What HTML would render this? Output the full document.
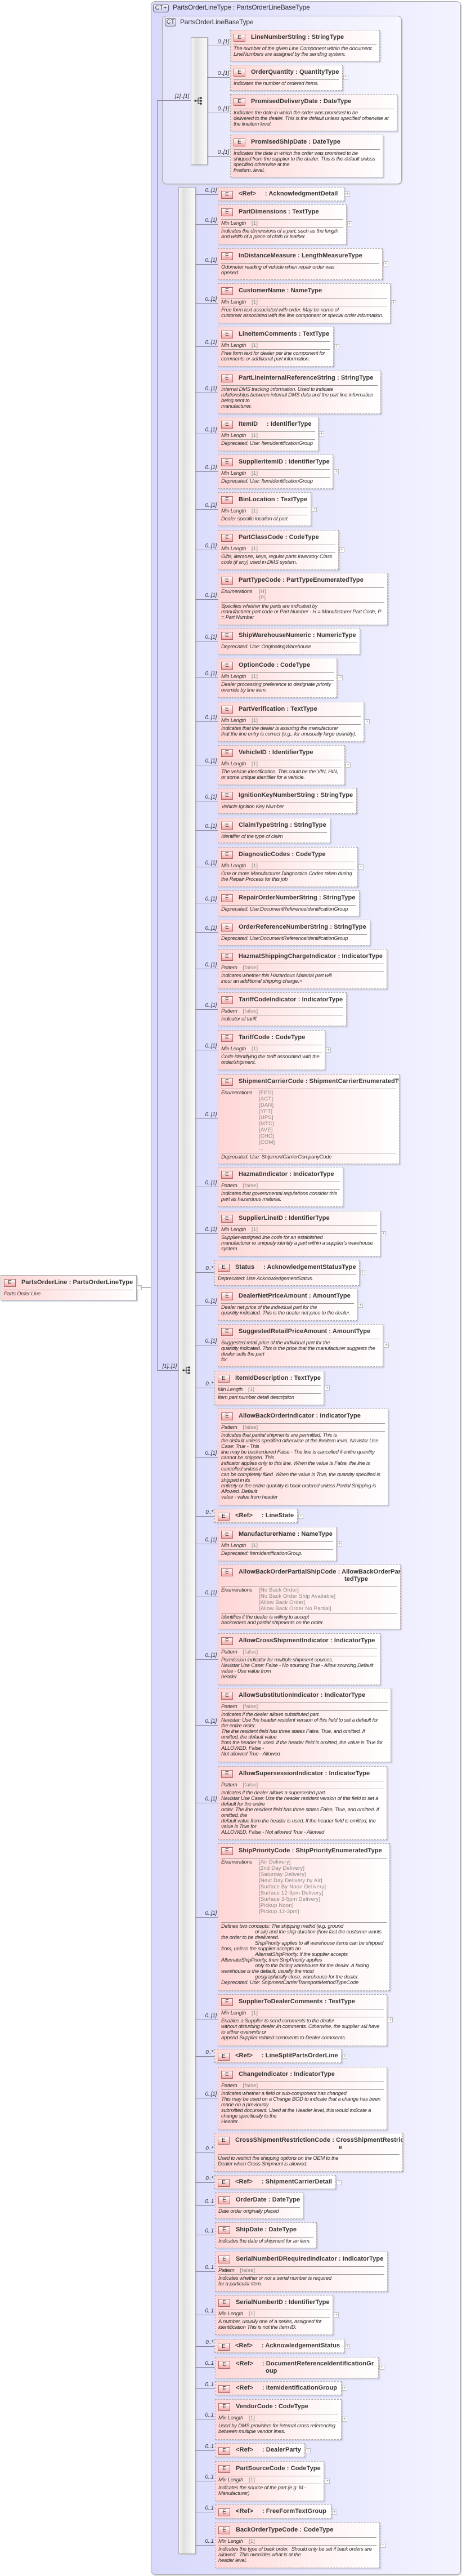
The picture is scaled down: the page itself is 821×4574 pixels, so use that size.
<!DOCTYPE html>
<html><head><meta charset="utf-8">
<style>
*{margin:0;padding:0;box-sizing:border-box}
body{width:821px;height:4574px;position:relative;background:#fff;font-family:"Liberation Sans",sans-serif;color:#333;overflow:hidden}
.ab{position:absolute}
.outer{left:268px;top:2px;width:551px;height:4570px;border:1px solid #aaa;border-radius:8px;background:linear-gradient(90deg,#d8d8fb,#f3f3ff);box-shadow:1px 1px 2px #bbb}
.inner{left:288px;top:28px;width:426px;height:299px;border:1px solid #aaa;border-radius:8px;background:linear-gradient(90deg,#e4e4fc,#f6f6ff);box-shadow:1px 1px 2px #bbb}
.ct{position:absolute;border:1px solid #667;border-radius:4px;background:linear-gradient(#fff,#c9c9ee);font-size:11px;line-height:12px;text-align:center;color:#334}
.ttl{position:absolute;font-size:12px;color:#333;letter-spacing:-0.2px}
.seq{position:absolute;border:1px solid #aaa;background:linear-gradient(90deg,#f4f4f4,#e0e0e0 30%,#fafafa);box-shadow:1px 1px 2px #bbb}
.ln{position:absolute;height:1px;background:#8a8a9a}
.vl{position:absolute;width:1px;background:#8a8a9a}
.c{position:absolute;font-style:italic;font-size:10px;width:26px;text-align:right;color:#333;letter-spacing:-0.3px}
.e{position:absolute;border:1px dashed #a8a8a8;background:linear-gradient(90deg,#ffd6d6,#fff0f0 60%,#fff);box-shadow:2px 2px 2px #c8c8d8;overflow:hidden}
.e.s{border-style:solid}
.h{position:relative;height:26px;line-height:24px;padding-left:31px;font-weight:bold;font-size:11px;color:#333;margin:0 5px 0 5px;border-bottom:1px solid #999;white-space:nowrap;letter-spacing:0.1px}
.h.r{border-bottom:none;height:23px;line-height:22px}
.h.t2{height:38px;line-height:13px;padding-top:6px}
.h i{position:absolute;left:0;top:6px;width:21px;height:14px;border:1px solid #a66;background:linear-gradient(#fff,#f3a8a8);font-style:normal;font-weight:normal;font-size:10px;line-height:12px;text-align:center;color:#333}
.h.t2 i{top:6px}
.f{margin:0 5px;height:14px;line-height:14px;border-bottom:1px solid #999;font-style:italic;font-size:9.5px;letter-spacing:-0.3px;white-space:nowrap}
.f b{font-weight:normal;font-style:normal;color:#888;margin-left:10px;letter-spacing:0.2px}
.en{margin:0 5px;border-bottom:1px solid #999;font-size:9.5px;position:relative;padding:1px 0 2px 67px;line-height:11px;color:#888;letter-spacing:0.2px;white-space:nowrap}
.en span{position:absolute;left:0;top:1px;font-style:italic;color:#333;letter-spacing:-0.3px}
.d{padding:2px 5px 2px 5px;font-style:italic;font-size:9.5px;line-height:10px;letter-spacing:-0.3px;white-space:nowrap}
.d u{text-decoration:none;padding-left:60px}
.p{position:absolute;width:9px;height:9px;border:1px solid #bbb;background:#fff;font-size:9px;line-height:7px;text-align:center;color:#999}
.ico{position:absolute;width:16px;height:16px}
</style></head><body>

<!-- root -->
<div class="e s" style="left:1px;top:2264px;width:242px;height:45px;border-color:#aaa"><div class="h" style="border-bottom:1px solid #999"><i>E</i>PartsOrderLine&nbsp;: PartsOrderLineType</div><div class="d">Parts Order Line</div></div>
<div class="p" style="left:243px;top:2282px;line-height:5px">&minus;</div>
<div class="ln" style="left:252px;top:2286px;width:27px"></div>

<div class="ab outer"></div>
<div class="ct" style="left:272px;top:7px;width:28px;height:15px">CT+</div>
<div class="ttl" style="left:307px;top:6px">PartsOrderLineType : PartsOrderLineBaseType</div>

<div class="ab inner"></div>
<div class="ct" style="left:293px;top:32px;width:20px;height:15px">CT</div>
<div class="ttl" style="left:320px;top:32px">PartsOrderLineBaseType</div>

<!-- main connector -->
<div class="vl" style="left:279px;top:178px;height:2256px"></div>
<div class="ln" style="left:279px;top:178px;width:60px"></div>
<div class="c" style="left:306px;top:166px;width:30px">[1]..[1]</div>
<div class="ln" style="left:279px;top:2433px;width:38px"></div>
<div class="c" style="left:284px;top:2421px;width:30px">[1]..[1]</div>

<!-- inner seq -->
<div class="seq" style="left:339px;top:66px;width:30px;height:227px"></div>
<svg class="ico" style="left:345px;top:171px" viewBox="0 0 16 16"><circle cx="2" cy="8" r="1.6" fill="#333"/><path d="M2 8H7M7 3V13M7 3H11M7 8H11M7 13H11" stroke="#333" fill="none"/><circle cx="12" cy="3" r="1.8" fill="#333"/><circle cx="12" cy="8" r="1.8" fill="#333"/><circle cx="12" cy="13" r="1.8" fill="#333"/></svg>

<div class="ln" style="left:368px;top:81px;width:41px"></div><div class="c" style="left:381px;top:69px">0..[1]</div>
<div class="e" style="left:409px;top:53px;width:266px;height:56px"><div class="h"><i>E</i>LineNumberString&nbsp;: StringType</div><div class="d">The number of the given Line Component within the document.<br>LineNumbers are assigned by the sending system.</div></div>

<div class="ln" style="left:368px;top:137px;width:41px"></div><div class="c" style="left:381px;top:125px">0..[1]</div>
<div class="e" style="left:409px;top:115px;width:200px;height:46px"><div class="h"><i>E</i>OrderQuantity&nbsp;: QuantityType</div><div class="d">Indicates the number of ordered items.</div></div>
<div class="p" style="left:610px;top:133px">+</div>

<div class="ln" style="left:368px;top:200px;width:41px"></div><div class="c" style="left:381px;top:188px">0..[1]</div>
<div class="e" style="left:409px;top:167px;width:297px;height:66px"><div class="h"><i>E</i>PromisedDeliveryDate&nbsp;: DateType</div><div class="d">Indicates the date in which the order was promised to be<br>delivered to the dealer. This is the default unless specified otherwise at<br>the lineitem level.</div></div>

<div class="ln" style="left:368px;top:277px;width:41px"></div><div class="c" style="left:381px;top:265px">0..[1]</div>
<div class="e" style="left:409px;top:239px;width:272px;height:76px"><div class="h"><i>E</i>PromisedShipDate&nbsp;: DateType</div><div class="d">Indicates the date in which the order was promised to be<br>shipped from the supplier to the dealer. This is the default unless<br>specified otherwise at the<br>lineitem. level.</div></div>

<!-- outer seq -->
<div class="seq" style="left:317px;top:332px;width:31px;height:4203px"></div>
<svg class="ico" style="left:324px;top:2425px" viewBox="0 0 16 16"><circle cx="2" cy="8" r="1.6" fill="#333"/><path d="M2 8H7M7 3V13M7 3H11M7 8H11M7 13H11" stroke="#333" fill="none"/><circle cx="12" cy="3" r="1.8" fill="#333"/><circle cx="12" cy="8" r="1.8" fill="#333"/><circle cx="12" cy="13" r="1.8" fill="#333"/></svg>

<div class="ln" style="left:347px;top:345px;width:40px"></div><div class="c" style="left:359px;top:333px">0..[1]</div>
<div class="e" style="left:387px;top:332px;width:225px;height:25px"><div class="h r"><i>E</i>&lt;Ref&gt;&nbsp;&nbsp;&nbsp;&nbsp;&nbsp;: AcknowledgmentDetail</div></div><div class="p" style="left:613px;top:340px">+</div>

<div class="ln" style="left:347px;top:398px;width:40px"></div><div class="c" style="left:359px;top:386px">0..[1]</div>
<div class="e" style="left:387px;top:363px;width:229px;height:71px"><div class="h"><i>E</i>PartDimensions&nbsp;: TextType</div><div class="f">Min Length<b>[1]</b></div><div class="d">Indicates the dimensions of a part, such as the length<br>and width of a piece of cloth or leather.</div></div><div class="p" style="left:617px;top:393px">+</div>

<div class="ln" style="left:347px;top:469px;width:40px"></div><div class="c" style="left:359px;top:457px">0..[1]</div>
<div class="e" style="left:387px;top:441px;width:293px;height:56px"><div class="h"><i>E</i>InDistanceMeasure&nbsp;: LengthMeasureType</div><div class="d">Odometer reading of vehicle when repair order was<br>opened</div></div><div class="p" style="left:681px;top:464px">+</div>

<div class="ln" style="left:347px;top:538px;width:40px"></div><div class="c" style="left:359px;top:526px">0..[1]</div>
<div class="e" style="left:387px;top:503px;width:307px;height:71px"><div class="h"><i>E</i>CustomerName&nbsp;: NameType</div><div class="f">Min Length<b>[1]</b></div><div class="d">Free form text associated with order. May be name of<br>customer associated with the line component or special order information.</div></div><div class="p" style="left:695px;top:533px">+</div>

<div class="ln" style="left:347px;top:615px;width:40px"></div><div class="c" style="left:359px;top:603px">0..[1]</div>
<div class="e" style="left:387px;top:580px;width:206px;height:71px"><div class="h"><i>E</i>LineItemComments&nbsp;: TextType</div><div class="f">Min Length<b>[1]</b></div><div class="d">Free form text for dealer per line component for<br>comments or additional part information.</div></div><div class="p" style="left:594px;top:611px">+</div>

<div class="ln" style="left:347px;top:697px;width:40px"></div><div class="c" style="left:359px;top:685px">0..[1]</div>
<div class="e" style="left:387px;top:658px;width:290px;height:77px"><div class="h"><i>E</i>PartLineInternalReferenceString&nbsp;: StringType</div><div class="d">Internal DMS tracking information. Used to indicate<br>relationships between internal DMS data and the part line information<br>being sent to<br>manufacturer.</div></div>

<div class="ln" style="left:347px;top:770px;width:40px"></div><div class="c" style="left:359px;top:758px">0..[1]</div>
<div class="e" style="left:387px;top:740px;width:179px;height:61px"><div class="h"><i>E</i>ItemID&nbsp;&nbsp;&nbsp;&nbsp;&nbsp;: IdentifierType</div><div class="f">Min Length<b>[1]</b></div><div class="d">Deprecated. Use: ItemIdentificationGroup</div></div><div class="p" style="left:567px;top:766px">+</div>

<div class="ln" style="left:347px;top:837px;width:40px"></div><div class="c" style="left:359px;top:825px">0..[1]</div>
<div class="e" style="left:387px;top:807px;width:205px;height:61px"><div class="h"><i>E</i>SupplierItemID&nbsp;: IdentifierType</div><div class="f">Min Length<b>[1]</b></div><div class="d">Deprecated. Use: ItemIdentificationGroup</div></div><div class="p" style="left:593px;top:833px">+</div>

<div class="ln" style="left:347px;top:904px;width:40px"></div><div class="c" style="left:359px;top:892px">0..[1]</div>
<div class="e" style="left:387px;top:874px;width:166px;height:60px"><div class="h"><i>E</i>BinLocation&nbsp;: TextType</div><div class="f">Min Length<b>[1]</b></div><div class="d">Dealer specific location of part.</div></div><div class="p" style="left:554px;top:900px">+</div>

<div class="ln" style="left:347px;top:976px;width:40px"></div><div class="c" style="left:359px;top:964px">0..[1]</div>
<div class="e" style="left:387px;top:941px;width:215px;height:71px"><div class="h"><i>E</i>PartClassCode&nbsp;: CodeType</div><div class="f">Min Length<b>[1]</b></div><div class="d">Gifts, literature, keys, regular parts Inventory Class<br>code (if any) used in DMS system.</div></div><div class="p" style="left:603px;top:972px">+</div>

<div class="ln" style="left:347px;top:1064px;width:40px"></div><div class="c" style="left:359px;top:1052px">0..[1]</div>
<div class="e" style="left:387px;top:1017px;width:302px;height:93px"><div class="h"><i>E</i>PartTypeCode&nbsp;: PartTypeEnumeratedType</div><div class="en"><span>Enumerations</span>[H]<br>[P]</div><div class="d">Specifies whether the parts are indicated by<br>manufacturer part code or Part Number - H = Manufacturer Part Code, P<br>= Part Number</div></div>

<div class="ln" style="left:347px;top:1138px;width:40px"></div><div class="c" style="left:359px;top:1126px">0..[1]</div>
<div class="e" style="left:387px;top:1115px;width:253px;height:47px"><div class="h"><i>E</i>ShipWarehouseNumeric&nbsp;: NumericType</div><div class="d">Deprecated. Use: OriginatingWarehouse</div></div>

<div class="ln" style="left:347px;top:1203px;width:40px"></div><div class="c" style="left:359px;top:1191px">0..[1]</div>
<div class="e" style="left:387px;top:1168px;width:212px;height:71px"><div class="h"><i>E</i>OptionCode&nbsp;: CodeType</div><div class="f">Min Length<b>[1]</b></div><div class="d">Dealer processing preference to designate priority<br>override by line item.</div></div><div class="p" style="left:600px;top:1199px">+</div>

<div class="ln" style="left:347px;top:1281px;width:40px"></div><div class="c" style="left:359px;top:1269px">0..[1]</div>
<div class="e" style="left:387px;top:1246px;width:260px;height:71px"><div class="h"><i>E</i>PartVerification&nbsp;: TextType</div><div class="f">Min Length<b>[1]</b></div><div class="d">Indicates that the dealer is assuring the manufacturer<br>that the line entry is correct (e.g., for unusually large quantity).</div></div><div class="p" style="left:648px;top:1277px">+</div>

<div class="ln" style="left:347px;top:1358px;width:40px"></div><div class="c" style="left:359px;top:1346px">0..[1]</div>
<div class="e" style="left:387px;top:1323px;width:226px;height:71px"><div class="h"><i>E</i>VehicleID&nbsp;: IdentifierType</div><div class="f">Min Length<b>[1]</b></div><div class="d">The vehicle identification. This could be the VIN, HIN,<br>or some unique identifier for a vehicle.</div></div><div class="p" style="left:614px;top:1354px">+</div>

<div class="ln" style="left:347px;top:1422px;width:40px"></div><div class="c" style="left:359px;top:1410px">0..[1]</div>
<div class="e" style="left:387px;top:1399px;width:247px;height:46px"><div class="h"><i>E</i>IgnitionKeyNumberString&nbsp;: StringType</div><div class="d">Vehicle Ignition Key Number</div></div>

<div class="ln" style="left:347px;top:1474px;width:40px"></div><div class="c" style="left:359px;top:1462px">0..[1]</div>
<div class="e" style="left:387px;top:1452px;width:200px;height:45px"><div class="h"><i>E</i>ClaimTypeString&nbsp;: StringType</div><div class="d">Identifier of the type of claim</div></div>

<div class="ln" style="left:347px;top:1539px;width:40px"></div><div class="c" style="left:359px;top:1527px">0..[1]</div>
<div class="e" style="left:387px;top:1504px;width:249px;height:71px"><div class="h"><i>E</i>DiagnosticCodes&nbsp;: CodeType</div><div class="f">Min Length<b>[1]</b></div><div class="d">One or more Manufacturer Diagnostics Codes taken during<br>the Repair Process for this job</div></div><div class="p" style="left:637px;top:1535px">+</div>

<div class="ln" style="left:347px;top:1603px;width:40px"></div><div class="c" style="left:359px;top:1591px">0..[1]</div>
<div class="e" style="left:387px;top:1581px;width:252px;height:46px"><div class="h"><i>E</i>RepairOrderNumberString&nbsp;: StringType</div><div class="d">Deprecated. Use:DocumentReferenceIdentificationGroup</div></div>

<div class="ln" style="left:347px;top:1655px;width:40px"></div><div class="c" style="left:359px;top:1643px">0..[1]</div>
<div class="e" style="left:387px;top:1633px;width:271px;height:46px"><div class="h"><i>E</i>OrderReferenceNumberString&nbsp;: StringType</div><div class="d">Deprecated. Use:DocumentReferenceIdentificationGroup</div></div>

<div class="ln" style="left:347px;top:1720px;width:40px"></div><div class="c" style="left:359px;top:1708px">0..[1]</div>
<div class="e" style="left:387px;top:1685px;width:301px;height:71px"><div class="h"><i>E</i>HazmatShippingChargeIndicator&nbsp;: IndicatorType</div><div class="f">Pattern<b>[false]</b></div><div class="d">Indicates whether this Hazardous Material part will<br>incur an additional shipping charge.&gt;</div></div>

<div class="ln" style="left:347px;top:1792px;width:40px"></div><div class="c" style="left:359px;top:1780px">0..[1]</div>
<div class="e" style="left:387px;top:1762px;width:229px;height:60px"><div class="h"><i>E</i>TariffCodeIndicator&nbsp;: IndicatorType</div><div class="f">Pattern<b>[false]</b></div><div class="d">Indicator of tariff.</div></div>

<div class="ln" style="left:347px;top:1864px;width:40px"></div><div class="c" style="left:359px;top:1852px">0..[1]</div>
<div class="e" style="left:387px;top:1829px;width:191px;height:71px"><div class="h"><i>E</i>TariffCode&nbsp;: CodeType</div><div class="f">Min Length<b>[1]</b></div><div class="d">Code identifying the tariff associated with the<br>order/shipment.</div></div><div class="p" style="left:579px;top:1860px">+</div>

<div class="ln" style="left:347px;top:1986px;width:40px"></div><div class="c" style="left:359px;top:1974px">0..[1]</div>
<div class="e" style="left:387px;top:1907px;width:323px;height:160px"><div class="h"><i>E</i>ShipmentCarrierCode&nbsp;: ShipmentCarrierEnumeratedType</div><div class="en"><span>Enumerations</span>[FED]<br>[ACT]<br>[DAN]<br>[YFT]<br>[UPS]<br>[MTC]<br>[AVE]<br>[CHO]<br>[COM]<br>...</div><div class="d">Deprecated. Use: ShipmentCarrierCompanyCode</div></div>

<div class="ln" style="left:347px;top:2107px;width:40px"></div><div class="c" style="left:359px;top:2095px">0..[1]</div>
<div class="e" style="left:387px;top:2072px;width:223px;height:71px"><div class="h"><i>E</i>HazmatIndicator&nbsp;: IndicatorType</div><div class="f">Pattern<b>[false]</b></div><div class="d">Indicates that governmental regulations consider this<br>part as hazardous material.</div></div>

<div class="ln" style="left:347px;top:2190px;width:40px"></div><div class="c" style="left:359px;top:2178px">0..[1]</div>
<div class="e" style="left:387px;top:2150px;width:289px;height:81px"><div class="h"><i>E</i>SupplierLineID&nbsp;: IdentifierType</div><div class="f">Min Length<b>[1]</b></div><div class="d">Supplier-assigned line code for an established<br>manufacturer to uniquely identify a part within a supplier's warehouse<br>system.</div></div><div class="p" style="left:677px;top:2186px">+</div>

<div class="ln" style="left:347px;top:2259px;width:34px"></div><div class="c" style="left:353px;top:2247px">0..*</div>
<div class="e" style="left:381px;top:2237px;width:258px;height:46px"><div class="h"><i>E</i>Status&nbsp;&nbsp;&nbsp;&nbsp;&nbsp;: AcknowledgementStatusType</div><div class="d">Deprecated: Use AcknowledgementStatus.</div></div><div class="p" style="left:640px;top:2255px">+</div>

<div class="ln" style="left:347px;top:2317px;width:40px"></div><div class="c" style="left:359px;top:2305px">0..[1]</div>
<div class="e" style="left:387px;top:2288px;width:248px;height:57px"><div class="h"><i>E</i>DealerNetPriceAmount&nbsp;: AmountType</div><div class="d">Dealer net price of the individual part for the<br>quantity indicated. This is the dealer net price to the dealer.</div></div><div class="p" style="left:636px;top:2313px">+</div>

<div class="ln" style="left:347px;top:2388px;width:40px"></div><div class="c" style="left:359px;top:2376px">0..[1]</div>
<div class="e" style="left:387px;top:2351px;width:294px;height:76px"><div class="h"><i>E</i>SuggestedRetailPriceAmount&nbsp;: AmountType</div><div class="d">Suggested retail price of the individual part for the<br>quantity indicated. This is the price that the manufacturer suggests the<br>dealer sells the part<br>for.</div></div><div class="p" style="left:682px;top:2384px">+</div>

<div class="ln" style="left:347px;top:2464px;width:34px"></div><div class="c" style="left:353px;top:2452px">0..*</div>
<div class="e" style="left:381px;top:2434px;width:195px;height:61px"><div class="h"><i>E</i>ItemIdDescription&nbsp;: TextType</div><div class="f">Min Length<b>[1]</b></div><div class="d">Item part number detail description</div></div><div class="p" style="left:577px;top:2460px">+</div>

<div class="ln" style="left:347px;top:2587px;width:40px"></div><div class="c" style="left:359px;top:2575px">0..[1]</div>
<div class="e" style="left:387px;top:2501px;width:303px;height:172px"><div class="h"><i>E</i>AllowBackOrderIndicator&nbsp;: IndicatorType</div><div class="f">Pattern<b>[false]</b></div><div class="d">Indicates that partial shipments are permitted. This is<br>the default unless specified otherwise at the lineitem level. Navistar Use<br>Case: True - This<br>line may be backordered False - The line is cancelled if entire quantity<br>cannot be shipped. This<br>indicator applies only to this line. When the value is False, the line is<br>cancelled unless it<br>can be completely filled. When the value is True, the quantity specified is<br>shipped in its<br>entirety or the entire quantity is back-ordered unless Partial Shipping is<br>Allowed. Default<br>value - value from header</div></div>

<div class="ln" style="left:347px;top:2692px;width:34px"></div><div class="c" style="left:353px;top:2680px">0..*</div>
<div class="e" style="left:381px;top:2679px;width:148px;height:25px"><div class="h r"><i>E</i>&lt;Ref&gt;&nbsp;&nbsp;&nbsp;&nbsp;&nbsp;: LineState</div></div><div class="p" style="left:530px;top:2688px">+</div>

<div class="ln" style="left:347px;top:2741px;width:40px"></div><div class="c" style="left:359px;top:2729px">0..[1]</div>
<div class="e" style="left:387px;top:2711px;width:211px;height:61px"><div class="h"><i>E</i>ManufacturerName&nbsp;: NameType</div><div class="f">Min Length<b>[1]</b></div><div class="d">Deprecated: ItemIdentificationGroup.</div></div><div class="p" style="left:599px;top:2737px">+</div>

<div class="ln" style="left:347px;top:2835px;width:40px"></div><div class="c" style="left:359px;top:2823px">0..[1]</div>
<div class="e" style="left:387px;top:2778px;width:325px;height:115px"><div class="h t2"><i>E</i>AllowBackOrderPartialShipCode&nbsp;: AllowBackOrderPartialShipEnumera<br><span style="padding-left:188px">tedType</span></div><div class="en"><span>Enumerations</span>[No Back Order]<br>[No Back Order Ship Available]<br>[Allow Back Order]<br>[Allow Back Order No Partial]</div><div class="d">Identifies if the dealer is willing to accept<br>backorders and partial shipments on the order.</div></div>

<div class="ln" style="left:347px;top:2946px;width:40px"></div><div class="c" style="left:359px;top:2934px">0..[1]</div>
<div class="e" style="left:387px;top:2900px;width:289px;height:92px"><div class="h"><i>E</i>AllowCrossShipmentIndicator&nbsp;: IndicatorType</div><div class="f">Pattern<b>[false]</b></div><div class="d">Permission indicator for multiple shipment sources.<br>Navistar Use Case: False - No sourcing True - Allow sourcing Default<br>value - Use value from<br>header</div></div>

<div class="ln" style="left:347px;top:3063px;width:40px"></div><div class="c" style="left:359px;top:3051px">0..[1]</div>
<div class="e" style="left:387px;top:2997px;width:308px;height:132px"><div class="h"><i>E</i>AllowSubstitutionIndicator&nbsp;: IndicatorType</div><div class="f">Pattern<b>[false]</b></div><div class="d">Indicates if the dealer allows substituted part.<br>Navistar: Use the header resident version of this field to set a default for<br>the entire order.<br>The line resident field has three states False, True, and omitted. If<br>omitted, the default value<br>from the header is used. If the header field is omitted, the value is True for<br>ALLOWED. False -<br>Not allowed True - Allowed</div></div>

<div class="ln" style="left:347px;top:3201px;width:40px"></div><div class="c" style="left:359px;top:3189px">0..[1]</div>
<div class="e" style="left:387px;top:3136px;width:301px;height:131px"><div class="h"><i>E</i>AllowSupersessionIndicator&nbsp;: IndicatorType</div><div class="f">Pattern<b>[false]</b></div><div class="d">Indicates if the dealer allows a superseded part.<br>Navistar Use Case: Use the header resident version of this field to set a<br>default for the entire<br>order. The line resident field has three states False, True, and omitted. If<br>omitted, the<br>default value from the header is used. If the header field is omitted, the<br>value is True for<br>ALLOWED. False - Not allowed True - Allowed</div></div>

<div class="ln" style="left:347px;top:3404px;width:40px"></div><div class="c" style="left:359px;top:3392px">0..[1]</div>
<div class="e" style="left:387px;top:3273px;width:306px;height:262px"><div class="h"><i>E</i>ShipPriorityCode&nbsp;: ShipPriorityEnumeratedType</div><div class="en"><span>Enumerations</span>[Air Delivery]<br>[2nd Day Delivery]<br>[Saturday Delivery]<br>[Next Day Delivery by Air]<br>[Surface By Noon Delivery]<br>[Surface 12-3pm Delivery]<br>[Surface 3-5pm Delivery]<br>[Pickup Noon]<br>[Pickup 12-3pm]<br>...</div><div class="d">Defines two concepts: The shipping methd (e.g. ground<br><u></u>or air) and the ship duration (how fast the customer wants<br>the order to be deelivered.<br><u></u>ShipPriority applies to all warehouse items can be shipped<br>from, unless the supplier accepts an<br><u></u>AlternatShipPriority. If the supplier accepts<br>AlternateShipPriority, then ShipPriority applies<br><u></u>only to the facing warehouse for the dealer. A facing<br>warehouse is the default, usually the most<br><u></u>geographically close, warehouse for the dealer.<br>Deprecated. Use: ShipmentCarrierTransportMethodTypeCode</div></div>

<div class="ln" style="left:347px;top:3586px;width:40px"></div><div class="c" style="left:359px;top:3574px">0..[1]</div>
<div class="e" style="left:387px;top:3541px;width:301px;height:92px"><div class="h"><i>E</i>SupplierToDealerComments&nbsp;: TextType</div><div class="f">Min Length<b>[1]</b></div><div class="d">Enables a Supplier to send comments to the dealer<br>without disturbing dealer lin comments. Otherwise, the supplier will have<br>to either overwrite or<br>append Supplier related comments to Dealer comments.</div></div><div class="p" style="left:689px;top:3582px">+</div>

<div class="ln" style="left:347px;top:3651px;width:34px"></div><div class="c" style="left:353px;top:3639px">0..*</div>
<div class="e" style="left:381px;top:3638px;width:226px;height:25px"><div class="h r"><i>E</i>&lt;Ref&gt;&nbsp;&nbsp;&nbsp;&nbsp;&nbsp;: LineSplitPartsOrderLine</div></div><div class="p" style="left:608px;top:3647px">+</div>

<div class="ln" style="left:347px;top:3725px;width:40px"></div><div class="c" style="left:359px;top:3713px">0..[1]</div>
<div class="e" style="left:387px;top:3670px;width:301px;height:112px"><div class="h"><i>E</i>ChangeIndicator&nbsp;: IndicatorType</div><div class="f">Pattern<b>[false]</b></div><div class="d">Indicates whether a field or sub-component has changed.<br>This may be used on a Change BOD to indicate that a change has been<br>made on a previously<br>submitted document. Used at the Header level, this would indicate a<br>change specifically to the<br>Header.</div></div>

<div class="ln" style="left:347px;top:3822px;width:34px"></div><div class="c" style="left:353px;top:3810px">0..*</div>
<div class="e" style="left:381px;top:3787px;width:335px;height:69px"><div class="h t2"><i>E</i>CrossShipmentRestrictionCode&nbsp;: CrossShipmentRestrictionCodeTyp<br><span style="padding-left:184px">e</span></div><div class="d">Used to restrict the shipping options on the OEM to the<br>Dealer when Cross Shipment is allowed.</div></div>

<div class="ln" style="left:347px;top:3875px;width:34px"></div><div class="c" style="left:353px;top:3863px">0..*</div>
<div class="e" style="left:381px;top:3862px;width:216px;height:25px"><div class="h r"><i>E</i>&lt;Ref&gt;&nbsp;&nbsp;&nbsp;&nbsp;&nbsp;: ShipmentCarrierDetail</div></div><div class="p" style="left:598px;top:3871px">+</div>

<div class="ln" style="left:347px;top:3916px;width:35px"></div><div class="c" style="left:354px;top:3904px">0..1</div>
<div class="e" style="left:382px;top:3893px;width:157px;height:47px"><div class="h"><i>E</i>OrderDate&nbsp;: DateType</div><div class="d">Date order originally placed</div></div>

<div class="ln" style="left:347px;top:3968px;width:35px"></div><div class="c" style="left:354px;top:3956px">0..1</div>
<div class="e" style="left:382px;top:3946px;width:181px;height:46px"><div class="h"><i>E</i>ShipDate&nbsp;: DateType</div><div class="d">Indicates the date of shipment for an item.</div></div>

<div class="ln" style="left:347px;top:4033px;width:35px"></div><div class="c" style="left:354px;top:4021px">0..1</div>
<div class="e" style="left:382px;top:3998px;width:307px;height:71px"><div class="h"><i>E</i>SerialNumberIDRequiredIndicator&nbsp;: IndicatorType</div><div class="f">Pattern<b>[false]</b></div><div class="d">Indicates whether or not a serial number is required<br>for a particular item.</div></div>

<div class="ln" style="left:347px;top:4110px;width:35px"></div><div class="c" style="left:354px;top:4098px">0..1</div>
<div class="e" style="left:382px;top:4075px;width:210px;height:71px"><div class="h"><i>E</i>SerialNumberID&nbsp;: IdentifierType</div><div class="f">Min Length<b>[1]</b></div><div class="d">A number, usually one of a series, assigned for<br>identification This is not the Item ID.</div></div><div class="p" style="left:593px;top:4106px">+</div>

<div class="ln" style="left:347px;top:4166px;width:34px"></div><div class="c" style="left:353px;top:4154px">0..*</div>
<div class="e" style="left:381px;top:4153px;width:231px;height:25px"><div class="h r"><i>E</i>&lt;Ref&gt;&nbsp;&nbsp;&nbsp;&nbsp;&nbsp;: AcknowledgementStatus</div></div><div class="p" style="left:613px;top:4162px">+</div>

<div class="ln" style="left:347px;top:4203px;width:35px"></div><div class="c" style="left:354px;top:4191px">0..1</div>
<div class="e" style="left:382px;top:4185px;width:291px;height:38px"><div class="h r t2" style="height:36px;padding-top:5px"><i>E</i>&lt;Ref&gt;&nbsp;&nbsp;&nbsp;&nbsp;&nbsp;: DocumentReferenceIdentificationGr<br><span style="padding-left:53px">oup</span></div></div><div class="p" style="left:674px;top:4199px">+</div>

<div class="ln" style="left:347px;top:4241px;width:35px"></div><div class="c" style="left:354px;top:4229px">0..1</div>
<div class="e" style="left:382px;top:4228px;width:225px;height:25px"><div class="h r"><i>E</i>&lt;Ref&gt;&nbsp;&nbsp;&nbsp;&nbsp;&nbsp;: ItemIdentificationGroup</div></div><div class="p" style="left:608px;top:4236px">+</div>

<div class="ln" style="left:347px;top:4295px;width:35px"></div><div class="c" style="left:354px;top:4283px">0..1</div>
<div class="e" style="left:382px;top:4260px;width:225px;height:72px"><div class="h"><i>E</i>VendorCode&nbsp;: CodeType</div><div class="f">Min Length<b>[1]</b></div><div class="d">Used by DMS providers for internal cross referencing<br>between multiple vendor lines.</div></div><div class="p" style="left:608px;top:4291px">+</div>

<div class="ln" style="left:347px;top:4351px;width:35px"></div><div class="c" style="left:354px;top:4339px">0..1</div>
<div class="e" style="left:382px;top:4338px;width:160px;height:25px"><div class="h r"><i>E</i>&lt;Ref&gt;&nbsp;&nbsp;&nbsp;&nbsp;&nbsp;: DealerParty</div></div><div class="p" style="left:543px;top:4347px">+</div>

<div class="ln" style="left:347px;top:4405px;width:35px"></div><div class="c" style="left:354px;top:4393px">0..1</div>
<div class="e" style="left:382px;top:4370px;width:194px;height:71px"><div class="h"><i>E</i>PartSourceCode&nbsp;: CodeType</div><div class="f">Min Length<b>[1]</b></div><div class="d">Indicates the source of the part (e.g. M -<br>Manufacturer)</div></div><div class="p" style="left:577px;top:4401px">+</div>

<div class="ln" style="left:347px;top:4460px;width:35px"></div><div class="c" style="left:354px;top:4448px">0..1</div>
<div class="e" style="left:382px;top:4447px;width:207px;height:25px"><div class="h r"><i>E</i>&lt;Ref&gt;&nbsp;&nbsp;&nbsp;&nbsp;&nbsp;: FreeFormTextGroup</div></div><div class="p" style="left:590px;top:4456px">+</div>

<div class="ln" style="left:347px;top:4519px;width:35px"></div><div class="c" style="left:354px;top:4507px">0..1</div>
<div class="e" style="left:382px;top:4479px;width:293px;height:81px"><div class="h"><i>E</i>BackOrderTypeCode&nbsp;: CodeType</div><div class="f">Min Length<b>[1]</b></div><div class="d">Indicates the type of back order.&nbsp; Should only be set if back orders are<br>allowed.&nbsp; This overrides what is at the<br>header level.</div></div><div class="p" style="left:676px;top:4515px">+</div>

</body></html>
